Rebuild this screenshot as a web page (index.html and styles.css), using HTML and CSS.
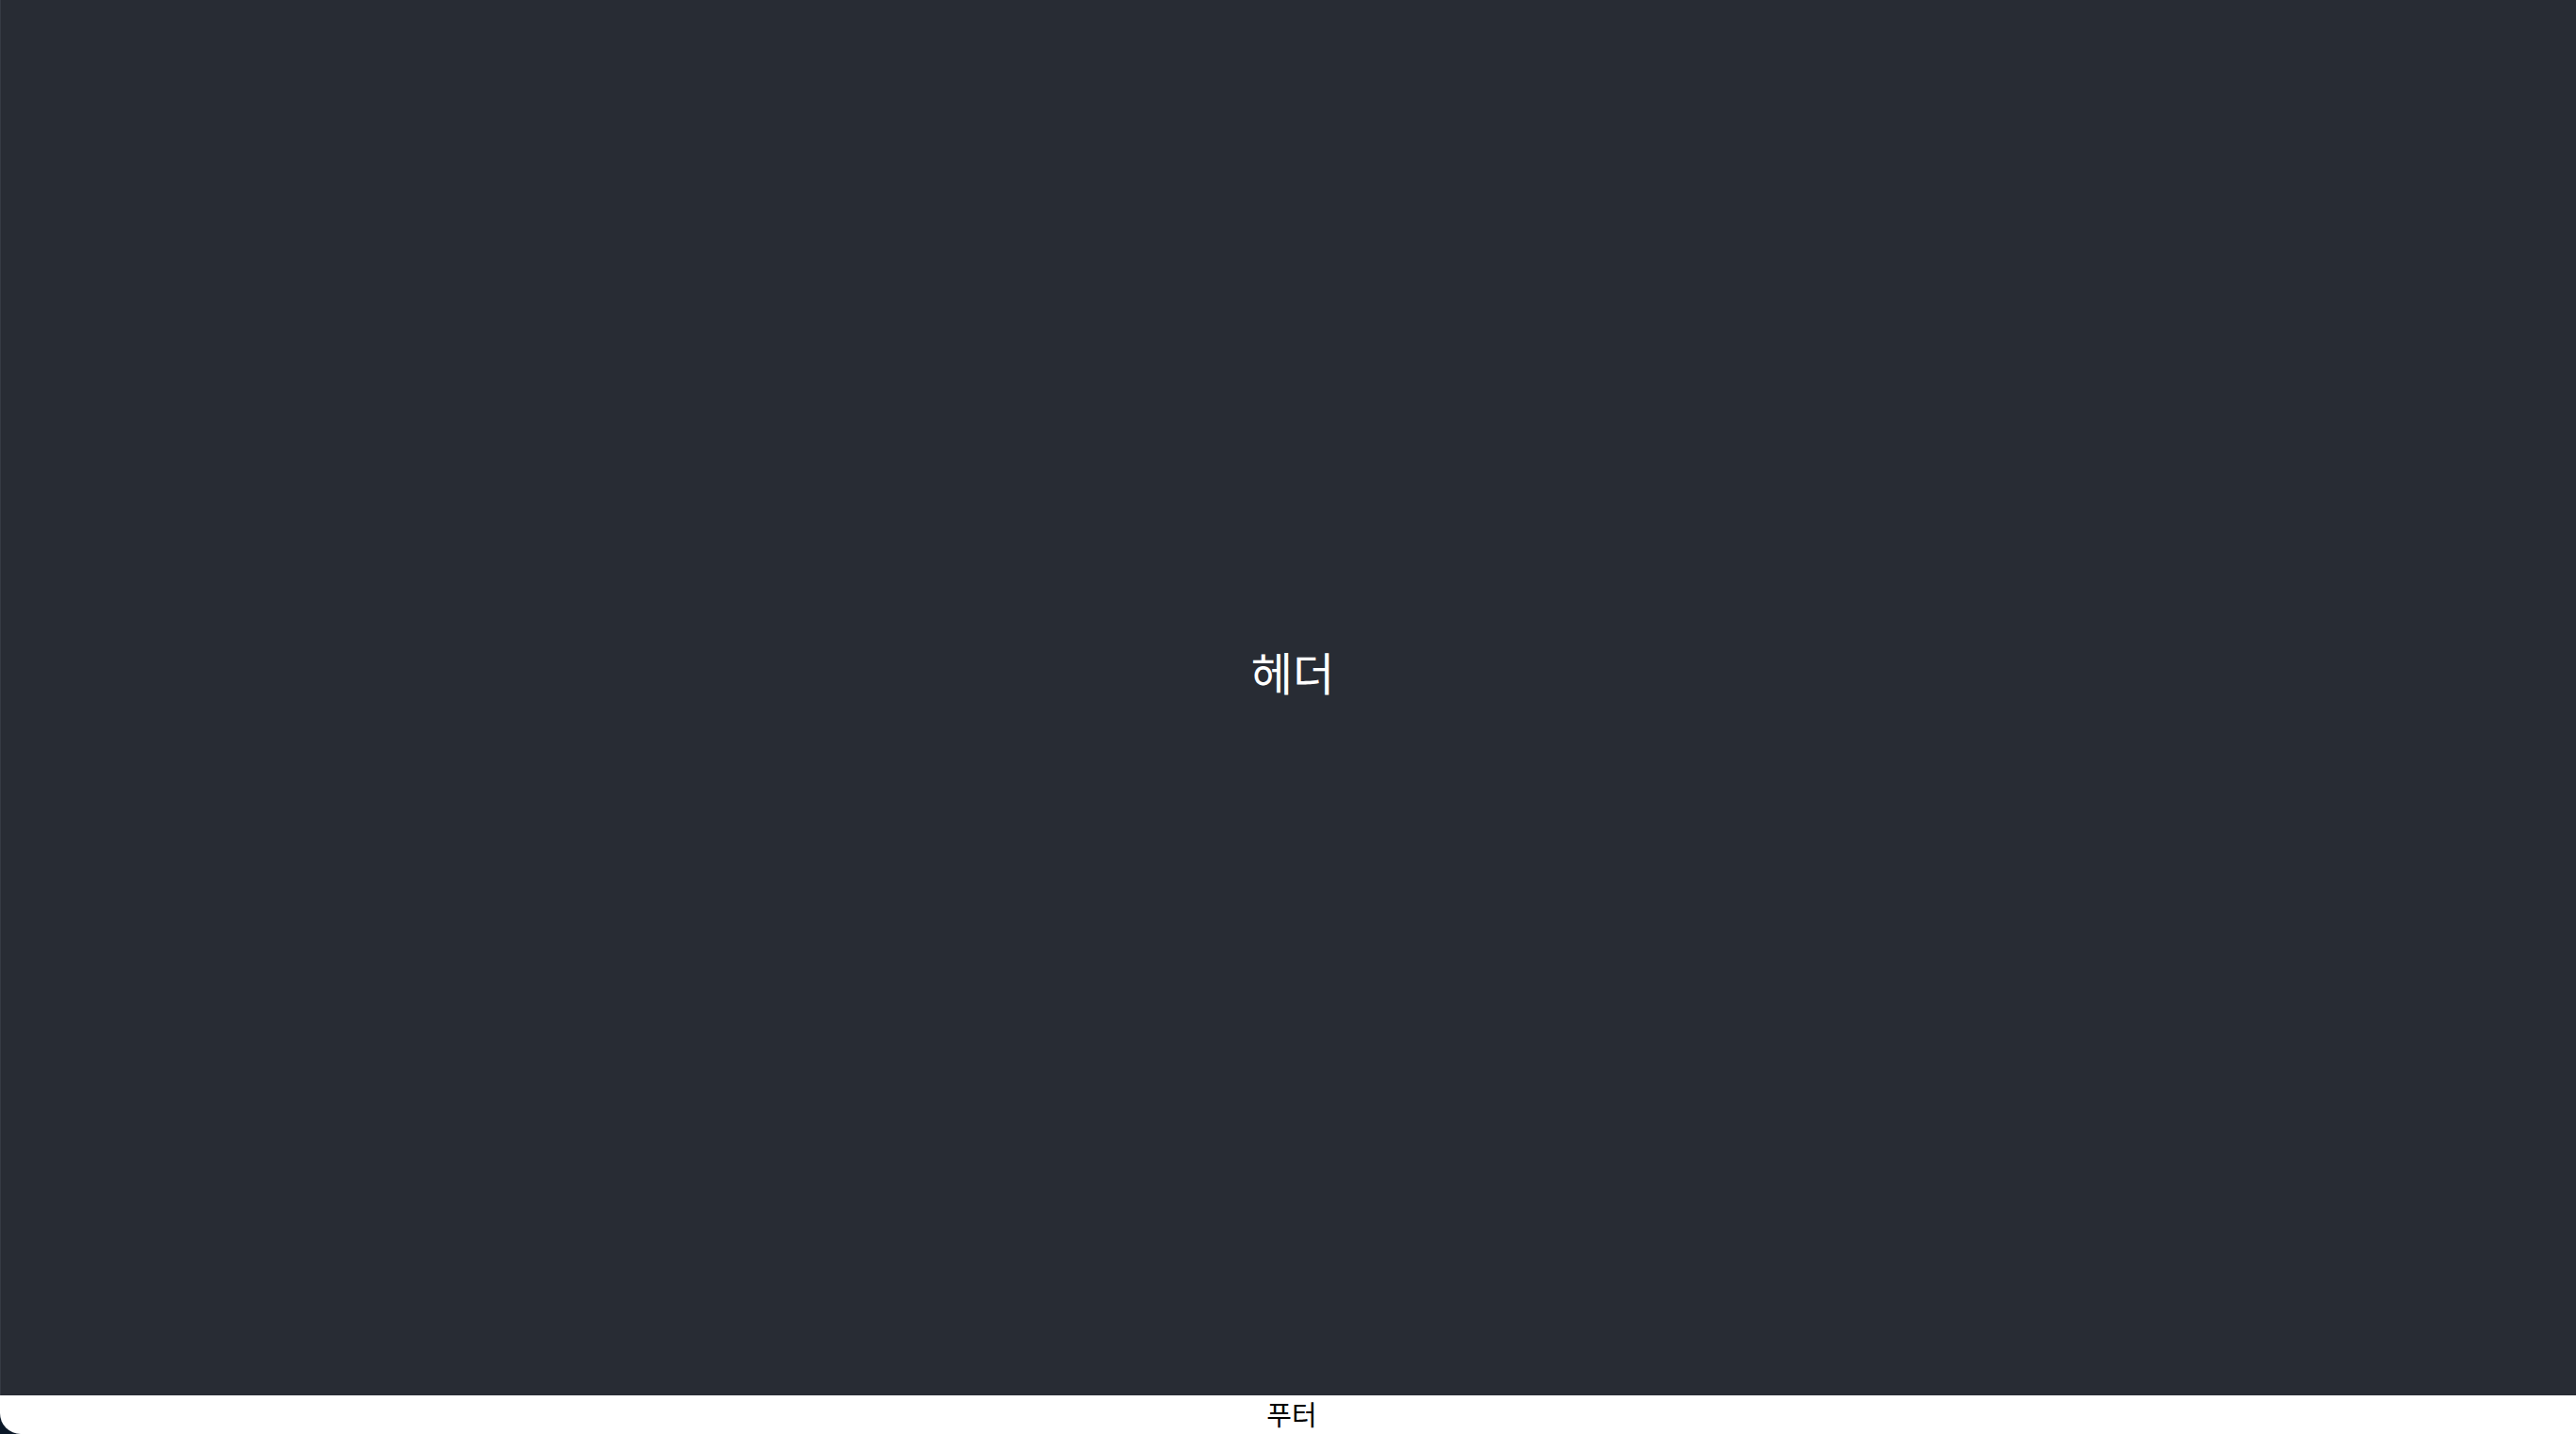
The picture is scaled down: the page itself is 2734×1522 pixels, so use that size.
FILE: index.html
```html
<!DOCTYPE html>
<html lang="ko">
<head>
<meta charset="utf-8">
<title>App</title>
<link rel="stylesheet" href="styles.css">
</head>
<body>
<div class="app">
  <header class="app-header">
    <span class="header-title">헤더</span>
  </header>
  <footer class="app-footer">푸터</footer>
</div>
</body>
</html>
```

FILE: styles.css
```css
html, body {
  margin: 0;
  padding: 0;
  height: 100%;
}
body {
  background: #0b1828;
  font-family: "Noto Sans CJK KR", "Noto Sans", sans-serif;
}
.app {
  display: flex;
  flex-direction: column;
  height: 100vh;
  background: #ffffff;
  border-bottom-left-radius: 22px;
  overflow: hidden;
}
.app-header {
  flex: 1;
  display: flex;
  align-items: center;
  justify-content: center;
  background: #282c34;
  border-left: 1px solid #353a43;
  padding-left: 9px;
  padding-bottom: 57px;
}
.header-title {
  color: #ffffff;
  font-size: 48px;
}
.app-footer {
  height: 41px;
  box-sizing: border-box;
  display: flex;
  align-items: center;
  justify-content: center;
  padding-left: 8px;
  padding-bottom: 3px;
  color: #000000;
  font-size: 29px;
  line-height: 38px;
}
```
